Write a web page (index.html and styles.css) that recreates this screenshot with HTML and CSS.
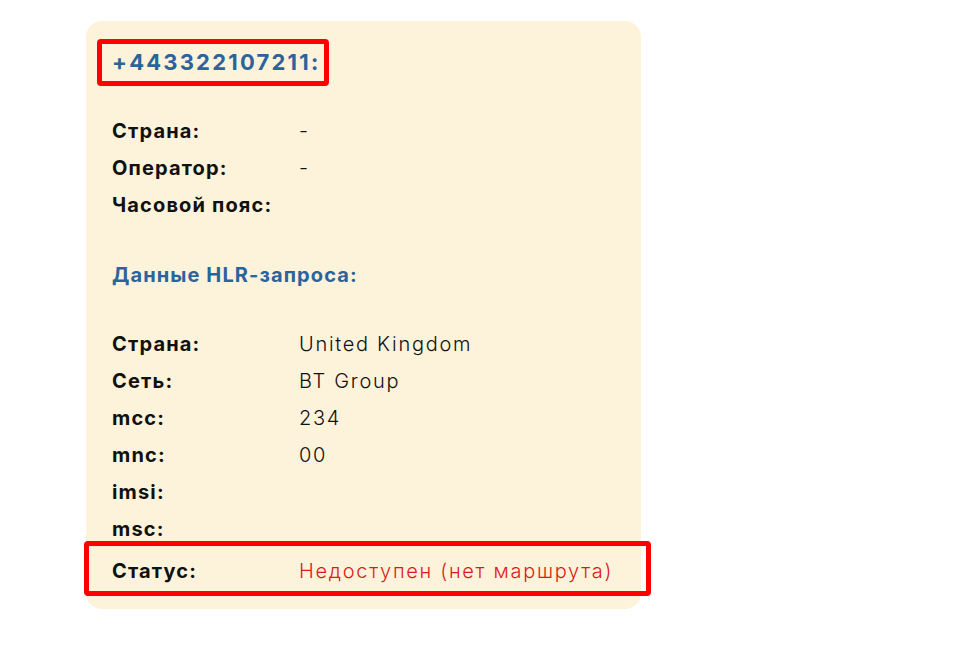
FILE: index.html
```html
<!DOCTYPE html>
<html lang="ru">
<head>
<meta charset="utf-8">
<title>HLR</title>
<link rel="stylesheet" href="styles.css">
</head>
<body>
<div class="card">
  <div class="phone">+443322107211:</div>
  <div class="info">
    <div class="row"><span class="label">Страна:</span><span class="value">-</span></div>
    <div class="row"><span class="label">Оператор:</span><span class="value">-</span></div>
    <div class="row"><span class="label">Часовой пояс:</span><span class="value"></span></div>
  </div>
  <div class="section">Данные HLR-запроса:</div>
  <div class="info">
    <div class="row"><span class="label">Страна:</span><span class="value">United Kingdom</span></div>
    <div class="row"><span class="label">Сеть:</span><span class="value">BT Group</span></div>
    <div class="row"><span class="label">mcc:</span><span class="value">234</span></div>
    <div class="row"><span class="label">mnc:</span><span class="value">00</span></div>
    <div class="row"><span class="label">imsi:</span><span class="value"></span></div>
    <div class="row"><span class="label">msc:</span><span class="value"></span></div>
    <div class="row status"><span class="label">Статус:</span><span class="value error">Недоступен (нет маршрута)</span></div>
  </div>
  <div class="mark mark-phone"></div>
  <div class="mark mark-status"></div>
</div>
</body>
</html>
```
FILE: styles.css
```css
html, body {
  margin: 0;
  padding: 0;
  background: #ffffff;
}
body {
  font-family: Inter, "Noto Sans", sans-serif;
  color: #111;
}
.card {
  position: relative;
  box-sizing: border-box;
  margin: 21px 0 0 86px;
  width: 555px;
  height: 588px;
  padding: 23px 26px;
  background: #fdf3da;
  border-radius: 16px;
}
.phone {
  line-height: 37px;
  font-size: 22px;
  font-weight: 700;
  letter-spacing: 2.2px;
  color: #2b639d;
  white-space: nowrap;
}
.section {
  margin-top: 33px;
  line-height: 37px;
  font-size: 20px;
  font-weight: 700;
  letter-spacing: 1.1px;
  color: #2b639d;
}
.info {
  margin-top: 32px;
}
.row {
  display: grid;
  grid-template-columns: 187px 1fr;
  height: 37px;
  line-height: 37px;
  white-space: nowrap;
}
.row.status {
  margin-top: 5px;
}
.label {
  font-size: 20px;
  font-weight: 700;
  letter-spacing: 1.15px;
  color: #111;
}
.value {
  font-size: 20px;
  font-weight: 300;
  letter-spacing: 1.7px;
  color: #111;
}
.value.error {
  color: #dc1a1a;
}
.mark {
  position: absolute;
  box-sizing: border-box;
  border: 5px solid #ff0000;
  border-radius: 4px;
}
.mark-phone {
  left: 11px;
  top: 18px;
  width: 232px;
  height: 47px;
}
.mark-status {
  left: -2px;
  top: 520px;
  width: 567px;
  height: 55px;
}
```
